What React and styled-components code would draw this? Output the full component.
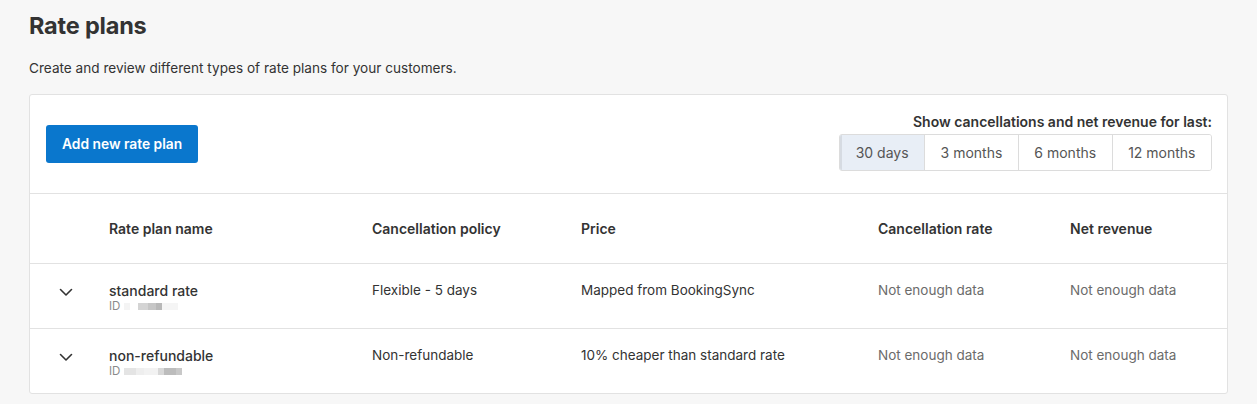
import React, { useState } from "react";
import styled, { createGlobalStyle } from "styled-components";

const Global = createGlobalStyle`
  html, body { margin: 0; padding: 0; background: #f7f7f7; }
  body { font-family: Inter, "Noto Sans", "Liberation Sans", sans-serif; color: #333; -webkit-font-smoothing: antialiased; }
  * { box-sizing: border-box; }
`;

const Page = styled.div`
  padding: 12px 29px 10px 29px;
`;

const Title = styled.h1`
  margin: 0;
  font-size: 23.5px;
  line-height: 28px;
  font-weight: 700;
  color: #333;
  letter-spacing: -0.2px;
`;

const Subtitle = styled.p`
  margin: 19px 0 0;
  font-size: 13.6px;
  line-height: 18px;
  color: #333;
`;

const Card = styled.section`
  margin-top: 17px;
  background: #fff;
  border: 1px solid #e2e2e2;
  border-radius: 3px;
`;

const Toolbar = styled.div`
  display: flex;
  align-items: center;
  justify-content: space-between;
  height: 99px;
  padding: 0 15px 0 16px;
  border-bottom: 1px solid #e2e2e2;
`;

const PrimaryButton = styled.button`
  height: 38px;
  padding: 0 16px;
  background: #0a77cd;
  color: #fff;
  border: none;
  border-radius: 3px;
  font-family: inherit;
  font-size: 13.8px;
  font-weight: 600;
  cursor: pointer;
`;

const PeriodGroup = styled.div`
  display: flex;
  flex-direction: column;
  align-items: flex-end;
  gap: 4px;
  margin-top: -4px;
`;

const PeriodLabel = styled.div`
  font-size: 14px;
  font-weight: 600;
  color: #333;
  line-height: 17px;
`;

const Segmented = styled.div`
  display: flex;
  border: 1px solid #dcdcdc;
  border-radius: 3px;
  overflow: hidden;
`;

const Segment = styled.button`
  height: 35px;
  padding: 0 15.5px;
  border: none;
  border-left: ${(p) => (p.$first ? "none" : "1px solid #dcdcdc")};
  background: ${(p) => (p.$active ? "#e8eef6" : "#fff")};
  box-shadow: ${(p) => (p.$active ? "inset 2px 0 0 #d6dbe2" : "none")};
  font-family: inherit;
  font-size: 14px;
  color: #555;
  cursor: pointer;
`;

const cols = "79px 263px 209px 297px 192px 1fr";

const HeaderRow = styled.div`
  display: grid;
  grid-template-columns: ${cols};
  align-items: center;
  height: 70px;
  border-bottom: 1px solid #e2e2e2;
`;

const HeadCell = styled.div`
  font-size: 14px;
  font-weight: 600;
  color: #333;
`;

const Row = styled.div`
  display: grid;
  grid-template-columns: ${cols};
  align-items: start;
  height: ${(p) => (p.$last ? 64 : 65)}px;
  padding-top: 18px;
  border-bottom: ${(p) => (p.$last ? "none" : "1px solid #e2e2e2")};
`;

const ToggleCell = styled.div`
  display: flex;
  justify-content: center;
  padding-top: 6px;
  padding-right: 7px;
`;

const Cell = styled.div`
  font-size: 13.5px;
  line-height: 17px;
  color: ${(p) => (p.$muted ? "#6b6b6b" : "#333")};
`;

const NameBlock = styled.div`
  display: flex;
  flex-direction: column;
`;

const PlanName = styled.div`
  font-size: 14px;
  line-height: 17px;
  font-weight: 500;
  color: #333;
`;

const IdLine = styled.div`
  display: flex;
  align-items: center;
  gap: 4px;
  font-size: 11.5px;
  line-height: 14px;
  color: #8a8a8a;
`;

const Redacted = styled.span`
  display: flex;
  height: 7px;
  filter: blur(0.6px);
`;

const Pixel = styled.span`
  display: block;
  height: 7px;
`;

function Blur({ blocks }) {
  return (
    <Redacted>
      {blocks.map(([w, c], i) => (
        <Pixel key={i} style={{ width: w, background: c }} />
      ))}
    </Redacted>
  );
}

const Chevron = () => (
  <svg width="14" height="9" viewBox="0 0 14 9" fill="none">
    <path d="M1.5 1.5 L7 7 L12.5 1.5" stroke="#333" strokeWidth="1.6" strokeLinecap="round" strokeLinejoin="round" />
  </svg>
);

const plans = [
  {
    name: "standard rate",
    id: [["6px", "#f4f4f4"], ["8px", "#fff"], ["10px", "#d4d4d4"], ["8px", "#c6c6c6"], ["6px", "#b8b8b8"], ["16px", "#f5f5f5"]],
    policy: "Flexible - 5 days",
    price: "Mapped from BookingSync",
  },
  {
    name: "non-refundable",
    id: [["12px", "#e4e4e4"], ["8px", "#eeeeee"], ["14px", "#f2f2f2"], ["6px", "#d8d8d8"], ["12px", "#bcbcbc"], ["6px", "#c8c8c8"]],
    policy: "Non-refundable",
    price: "10% cheaper than standard rate",
  },
];

const periods = ["30 days", "3 months", "6 months", "12 months"];

export default function App() {
  const [active, setActive] = useState(0);
  return (
    <Page>
      <Global />
      <Title>Rate plans</Title>
      <Subtitle>Create and review different types of rate plans for your customers.</Subtitle>
      <Card>
        <Toolbar>
          <PrimaryButton>Add new rate plan</PrimaryButton>
          <PeriodGroup>
            <PeriodLabel>Show cancellations and net revenue for last:</PeriodLabel>
            <Segmented>
              {periods.map((label, i) => (
                <Segment key={label} $first={i === 0} $active={i === active} onClick={() => setActive(i)}>
                  {label}
                </Segment>
              ))}
            </Segmented>
          </PeriodGroup>
        </Toolbar>
        <HeaderRow>
          <div />
          <HeadCell>Rate plan name</HeadCell>
          <HeadCell>Cancellation policy</HeadCell>
          <HeadCell>Price</HeadCell>
          <HeadCell>Cancellation rate</HeadCell>
          <HeadCell>Net revenue</HeadCell>
        </HeaderRow>
        {plans.map((p, i) => (
          <Row key={p.name} $last={i === plans.length - 1}>
            <ToggleCell>
              <Chevron />
            </ToggleCell>
            <NameBlock>
              <PlanName>{p.name}</PlanName>
              <IdLine>
                ID <Blur blocks={p.id} />
              </IdLine>
            </NameBlock>
            <Cell>{p.policy}</Cell>
            <Cell>{p.price}</Cell>
            <Cell $muted>Not enough data</Cell>
            <Cell $muted>Not enough data</Cell>
          </Row>
        ))}
      </Card>
    </Page>
  );
}
